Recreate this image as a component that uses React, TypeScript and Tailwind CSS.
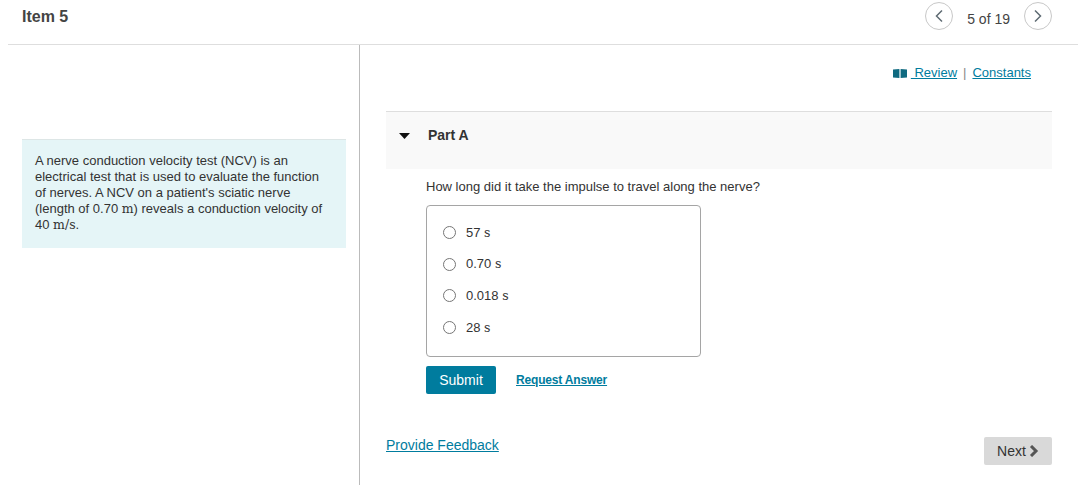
import React from 'react';

const sans = 'font-["Liberation_Sans",Arial,sans-serif]';
const math = 'font-["DejaVu_Serif","Liberation_Serif",serif]';

const options = ['57', '0.70', '0.018', '28'];

const App: React.FC = () => {
  return (
    <div className={`h-[485px] w-[1078px] overflow-hidden bg-white text-[#333] ${sans}`}>
      <header className="ml-[8px] flex h-[45px] items-start justify-between border-b border-[#dedede]">
        <h1 className="ml-[14px] mt-[8px] text-[16px] font-bold leading-[18px] text-[#444]">Item 5</h1>
        <div className="mr-[26px] mt-[2px] flex items-center text-[14px]">
          <button className="flex h-[28px] w-[28px] items-center justify-center rounded-full border border-[#c8c8c8]">
            <svg width="10" height="14" viewBox="0 0 10 14" fill="none" stroke="#5f6b73" strokeWidth="1.5"><path d="M8 1.5 2.5 7 8 12.5" /></svg>
          </button>
          <span className="mx-[14px] mt-[6px] text-[#444]">5 of 19</span>
          <button className="flex h-[28px] w-[28px] items-center justify-center rounded-full border border-[#c8c8c8]">
            <svg width="10" height="14" viewBox="0 0 10 14" fill="none" stroke="#5f6b73" strokeWidth="1.5"><path d="m2 1.5 5.5 5.5L2 12.5" /></svg>
          </button>
        </div>
      </header>
      <div className="flex h-[440px]">
        <aside className="w-[360px] shrink-0 border-r border-[#bbb] pl-[22px] pr-[13px] pt-[94px]">
          <div className="h-[109px] border-t border-[#dde6e6] bg-[#e5f5f7] pl-[13px] pr-[16px] pt-[13px] text-[13px] leading-[16px]">
            A nerve conduction velocity test (NCV) is an electrical test that is used to evaluate the function of nerves. A NCV on a patient's sciatic nerve (length of 0.70 <span className={`${math} text-[12.5px] leading-[14px]`}>m</span>) reveals a conduction velocity of 40 <span className={`${math} text-[12.5px] leading-[14px]`}>m/s</span>.
          </div>
        </aside>
        <main className="flex-1 pl-[26px] pr-[26px]">
          <div className="mt-[20px] flex h-[16px] items-center justify-end pr-[21px] text-[13px] text-[#007c9e]">
            <svg width="14" height="9" viewBox="0 0 14 9" fill="#0f6a80" className="mr-[4px]"><path d="M0 0.6 6.4 0v9L0 8.4zM7.6 0 14 0.6v7.8L7.6 9z" /></svg>
            <a className="whitespace-pre underline"> Review</a>
            <span className="mx-[6px] text-[#888]">|</span>
            <a className="underline">Constants</a>
          </div>
          <div className="mt-[30px] flex h-[58px] items-start border-t border-[#dedede] bg-[#f9f9f9] pt-[15px]">
            <svg width="11" height="6" viewBox="0 0 11 6" className="ml-[13px] mt-[6px]"><path d="M0 0h11L5.5 6z" fill="#111" /></svg>
            <span className="ml-[18px] text-[14px] font-bold leading-[16px] text-[#333]">Part A</span>
          </div>
          <div className="pl-[40px]">
            <p className="mt-[10px] text-[13px] leading-[16px]">How long did it take the impulse to travel along the nerve?</p>
            <div className="mt-[10px] flex h-[152px] w-[275px] flex-col gap-[9.6px] rounded-[4px] border border-[#a5a5a5] pl-[16px] pt-[15.5px]">
              {options.map((v) => (
                <label key={v} className="flex h-[22px] items-center text-[13px]">
                  <span className="h-[13px] w-[13px] rounded-full border border-[#767676] bg-white" />
                  <span className="ml-[10px]">{v} <span className={`${math} text-[12.5px] leading-[14px]`}>s</span></span>
                </label>
              ))}
            </div>
            <div className="mt-[9px] flex items-center">
              <button className="h-[28px] w-[70px] rounded-[2px] bg-[#007c9e] text-[14px] text-white">Submit</button>
              <a className="ml-[20px] text-[12px] font-bold tracking-[-0.015em] text-[#007c9e] underline">Request Answer</a>
            </div>
          </div>
          <div className="mt-[43px] flex items-start justify-between">
            <a className="mt-[-2px] text-[14px] text-[#007c9e] underline">Provide Feedback</a>
            <button className="flex h-[28px] w-[68px] items-center justify-center gap-[3px] rounded-[2px] bg-[#d9d9d9] text-[14px] text-[#333]">
              Next
              <svg width="10" height="12" viewBox="0 0 10 12" fill="none" stroke="#555" strokeWidth="3"><path d="m2 1 5 5-5 5" /></svg>
            </button>
          </div>
        </main>
      </div>
    </div>
  );
};

export default App;
